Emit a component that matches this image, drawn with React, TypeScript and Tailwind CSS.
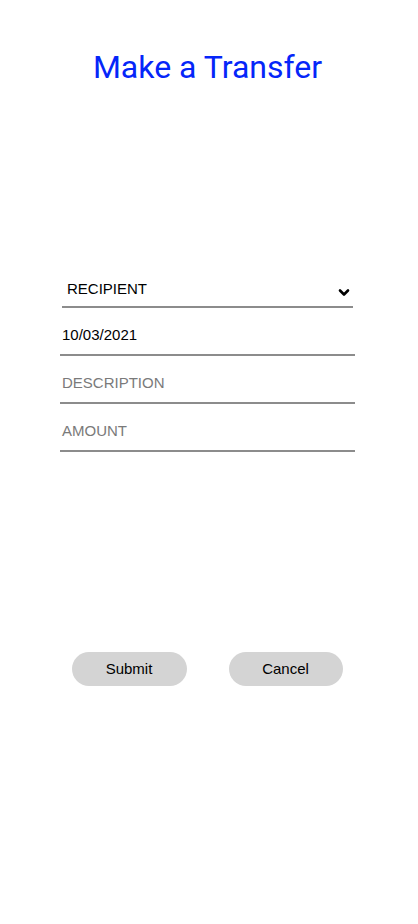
import React from 'react';

const Field: React.FC<{ value?: string; placeholder?: string }> = ({ value, placeholder }) => (
  <div className="h-[48px] flex items-end pb-[11px] pl-[2px] border-b-2 border-[#8c8c8c]">
    {value ? (
      <span className="text-[15px] leading-[17px] text-black">{value}</span>
    ) : (
      <span className="text-[15px] leading-[17px] text-[#7a7a7a]">{placeholder}</span>
    )}
  </div>
);

const App: React.FC = () => {
  return (
    <div className="w-[418px] min-h-[924px] bg-white flex flex-col font-['Liberation_Sans',Arial,sans-serif]">
      <h1 className="mt-[45px] pr-[3px] text-center text-[32px] leading-[44px] text-[#0526f9] font-['Roboto',sans-serif]">
        Make a Transfer
      </h1>

      <div className="mt-[171px] flex flex-col">
        <div className="ml-[62px] w-[291px] h-[48px] flex items-end justify-between pb-[9px] pl-[5px] pr-[3px] border-b-2 border-[#8c8c8c]">
          <span className="text-[15px] leading-[17px] text-black">RECIPIENT</span>
          <svg width="12" height="9" viewBox="0 0 12 9" className="mb-[0px]">
            <path d="M2 2.5 L6 6.5 L10 2.5" fill="none" stroke="black" strokeWidth="2.6" strokeLinecap="round" strokeLinejoin="round" />
          </svg>
        </div>
        <div className="ml-[60px] w-[295px] flex flex-col">
          <Field value="10/03/2021" />
          <Field placeholder="DESCRIPTION" />
          <Field placeholder="AMOUNT" />
        </div>
      </div>

      <div className="mt-[200px] flex justify-center gap-[42px] pr-[4px]">
        <button className="w-[115px] h-[34px] rounded-full bg-[#d4d4d4] text-[15px] text-black">Submit</button>
        <button className="w-[114px] h-[34px] rounded-full bg-[#d4d4d4] text-[15px] text-black">Cancel</button>
      </div>
    </div>
  );
};

export default App;
